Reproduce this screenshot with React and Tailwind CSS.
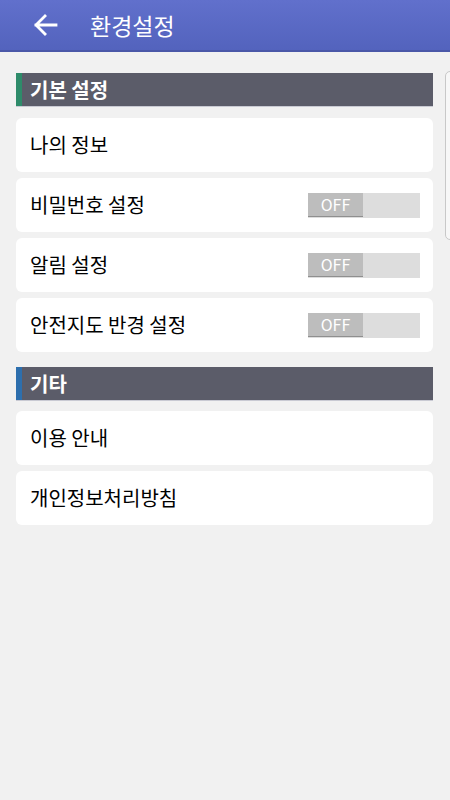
function Toggle() {
  return (
    <div className="w-[112px] h-[25px] bg-[#dddddd] flex">
      <div className="w-[55px] h-[24px] bg-[#bdbdbd] border-b border-[#8f8f8f] flex items-center justify-center text-white text-[16px] leading-none">
        OFF
      </div>
    </div>
  );
}

function Row({ label, toggle }) {
  return (
    <div className="h-[54px] bg-white rounded-[6px] flex items-center justify-between pl-[14px] pr-[13px]">
      <span className="text-[20px] text-black">{label}</span>
      {toggle && <Toggle />}
    </div>
  );
}

function SectionTitle({ title, color }) {
  return (
    <div className="h-[34px] bg-[#5b5c69] flex items-center border-b border-[#c9cad3]">
      <div className={`w-[6px] h-full ${color}`} />
      <span className="ml-[8px] text-white text-[20px] font-bold">{title}</span>
    </div>
  );
}

export default function App() {
  return (
    <div
      className="relative w-[450px] h-[800px] bg-[#f1f1f1] overflow-hidden"
      style={{ fontFamily: '"Noto Sans CJK KR", "Noto Sans", sans-serif' }}
    >
      <div className="h-[52px] bg-gradient-to-b from-[#6170cc] to-[#5363bd] border-b-2 border-[#4a58a8] flex items-center">
        <svg className="ml-[33px]" width="25" height="24" viewBox="0 0 25 24" fill="none">
          <path d="M23 12H3M12 3l-9 9 9 9" stroke="white" strokeWidth="2.8" strokeLinecap="square" />
        </svg>
        <span className="ml-[32px] text-white text-[23px]">환경설정</span>
      </div>

      <div className="pl-[16px] pr-[17px] pt-[21px] flex flex-col">
        <SectionTitle title="기본 설정" color="bg-[#2e8b6a]" />
        <div className="mt-[11px] flex flex-col gap-[6px]">
          <Row label="나의 정보" />
          <Row label="비밀번호 설정" toggle />
          <Row label="알림 설정" toggle />
          <Row label="안전지도 반경 설정" toggle />
        </div>

        <div className="mt-[15px]">
          <SectionTitle title="기타" color="bg-[#2d6fae]" />
        </div>
        <div className="mt-[10px] flex flex-col gap-[6px]">
          <Row label="이용 안내" />
          <Row label="개인정보처리방침" />
        </div>
      </div>

      <div className="absolute left-[445px] top-[71px] w-[20px] h-[169px] rounded-[5px] border border-[#c8c8c8] bg-[#f7f7f7]" />
    </div>
  );
}
